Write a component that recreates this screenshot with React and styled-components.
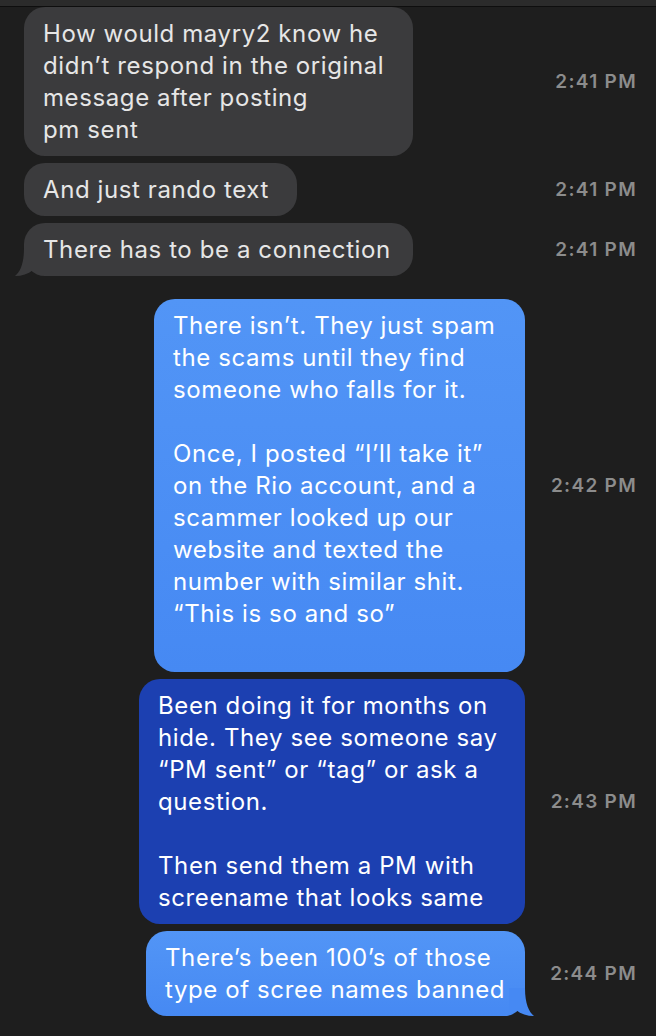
import React from "react";
import styled, { createGlobalStyle } from "styled-components";

const GlobalStyle = createGlobalStyle`
  html, body {
    margin: 0;
    padding: 0;
    background: #1e1e1e;
  }
  body {
    font-family: "Inter", "Noto Sans", sans-serif;
    -webkit-font-smoothing: antialiased;
  }
`;

const Window = styled.div`
  width: 656px;
  height: 1036px;
  overflow: hidden;
  background: #1e1e1e;
  display: flex;
  flex-direction: column;
`;

const TopBar = styled.div`
  height: 6px;
  background: #2b2b2b;
  border-bottom: 1px solid #0e0e0e;
  flex-shrink: 0;
`;

const Thread = styled.div`
  display: flex;
  flex-direction: column;
  gap: 7px;
`;

const Row = styled.div`
  display: grid;
  grid-template-columns: 1fr 112px;
  align-items: center;
  padding: 0 19px 0 24px;
  margin-top: ${(p) => (p.$groupStart ? "16px" : "0")};
`;

const Bubble = styled.div`
  position: relative;
  justify-self: ${(p) => (p.$out ? "end" : "start")};
  width: ${(p) => p.$w}px;
  box-sizing: border-box;
  padding: 11px 19px 10px;
  border-radius: 21px;
  font-size: 24px;
  line-height: 32px;
  letter-spacing: 0.6px;
  white-space: pre;
  color: ${(p) => (p.$tone === "gray" ? "#e6e6e6" : "#ffffff")};
  background: ${(p) =>
    p.$tone === "gray"
      ? "#3b3b3d"
      : p.$tone === "dark"
      ? "#1c40b1"
      : "linear-gradient(180deg, #5295f6 0%, #4689f3 100%)"};
`;

const Tail = styled.svg`
  position: absolute;
  bottom: 0;
  width: 26px;
  height: 28px;
  ${(p) =>
    p.$out
      ? "right: -10px; transform: scaleX(-1);"
      : "left: -10px;"}
`;

const Time = styled.div`
  text-align: right;
  font-size: 19px;
  font-weight: 600;
  color: #8c8c8c;
  letter-spacing: 1.3px;
`;

const messages = [
  {
    tone: "gray",
    w: 389,
    time: "2:41 PM",
    text: "How would mayry2 know he\ndidn\u2019t respond in the original\nmessage after posting\npm sent",
  },
  { tone: "gray", w: 273, time: "2:41 PM", text: "And just rando text" },
  {
    tone: "gray",
    w: 389,
    time: "2:41 PM",
    tail: true,
    text: "There has to be a connection",
  },
  {
    tone: "blue",
    out: true,
    groupStart: true,
    w: 371,
    time: "2:42 PM",
    text:
      "There isn\u2019t. They just spam\nthe scams until they find\nsomeone who falls for it.\n\nOnce, I posted \u201cI\u2019ll take it\u201d\non the Rio account, and a\nscammer looked up our\nwebsite and texted the\nnumber with similar shit.\n\u201cThis is so and so\u201d\n\u00a0",
  },
  {
    tone: "dark",
    out: true,
    w: 386,
    time: "2:43 PM",
    text:
      "Been doing it for months on\nhide. They see someone say\n\u201cPM sent\u201d or \u201ctag\u201d or ask a\nquestion.\n\nThen send them a PM with\nscreename that looks same",
  },
  {
    tone: "blue",
    out: true,
    w: 379,
    time: "2:44 PM",
    tail: true,
    text: "There\u2019s been 100\u2019s of those\ntype of scree names banned",
  },
];

const tailColor = { gray: "#3b3b3d", blue: "#4689f3", dark: "#1c40b1" };

export default function App() {
  return (
    <Window>
      <GlobalStyle />
      <TopBar />
      <Thread>
        {messages.map((m, i) => (
          <Row key={i} $groupStart={m.groupStart}>
            <Bubble $tone={m.tone} $out={m.out} $w={m.w}>
              {m.tail && (
                <Tail $out={m.out} viewBox="0 0 26 28">
                  <path
                    d="M10 0 C10 16 6 24 1 28 C8 28 14 26 19 22 L26 22 L26 0 Z"
                    fill={tailColor[m.tone]}
                  />
                </Tail>
              )}
              {m.text}
            </Bubble>
            <Time>{m.time}</Time>
          </Row>
        ))}
      </Thread>
    </Window>
  );
}
